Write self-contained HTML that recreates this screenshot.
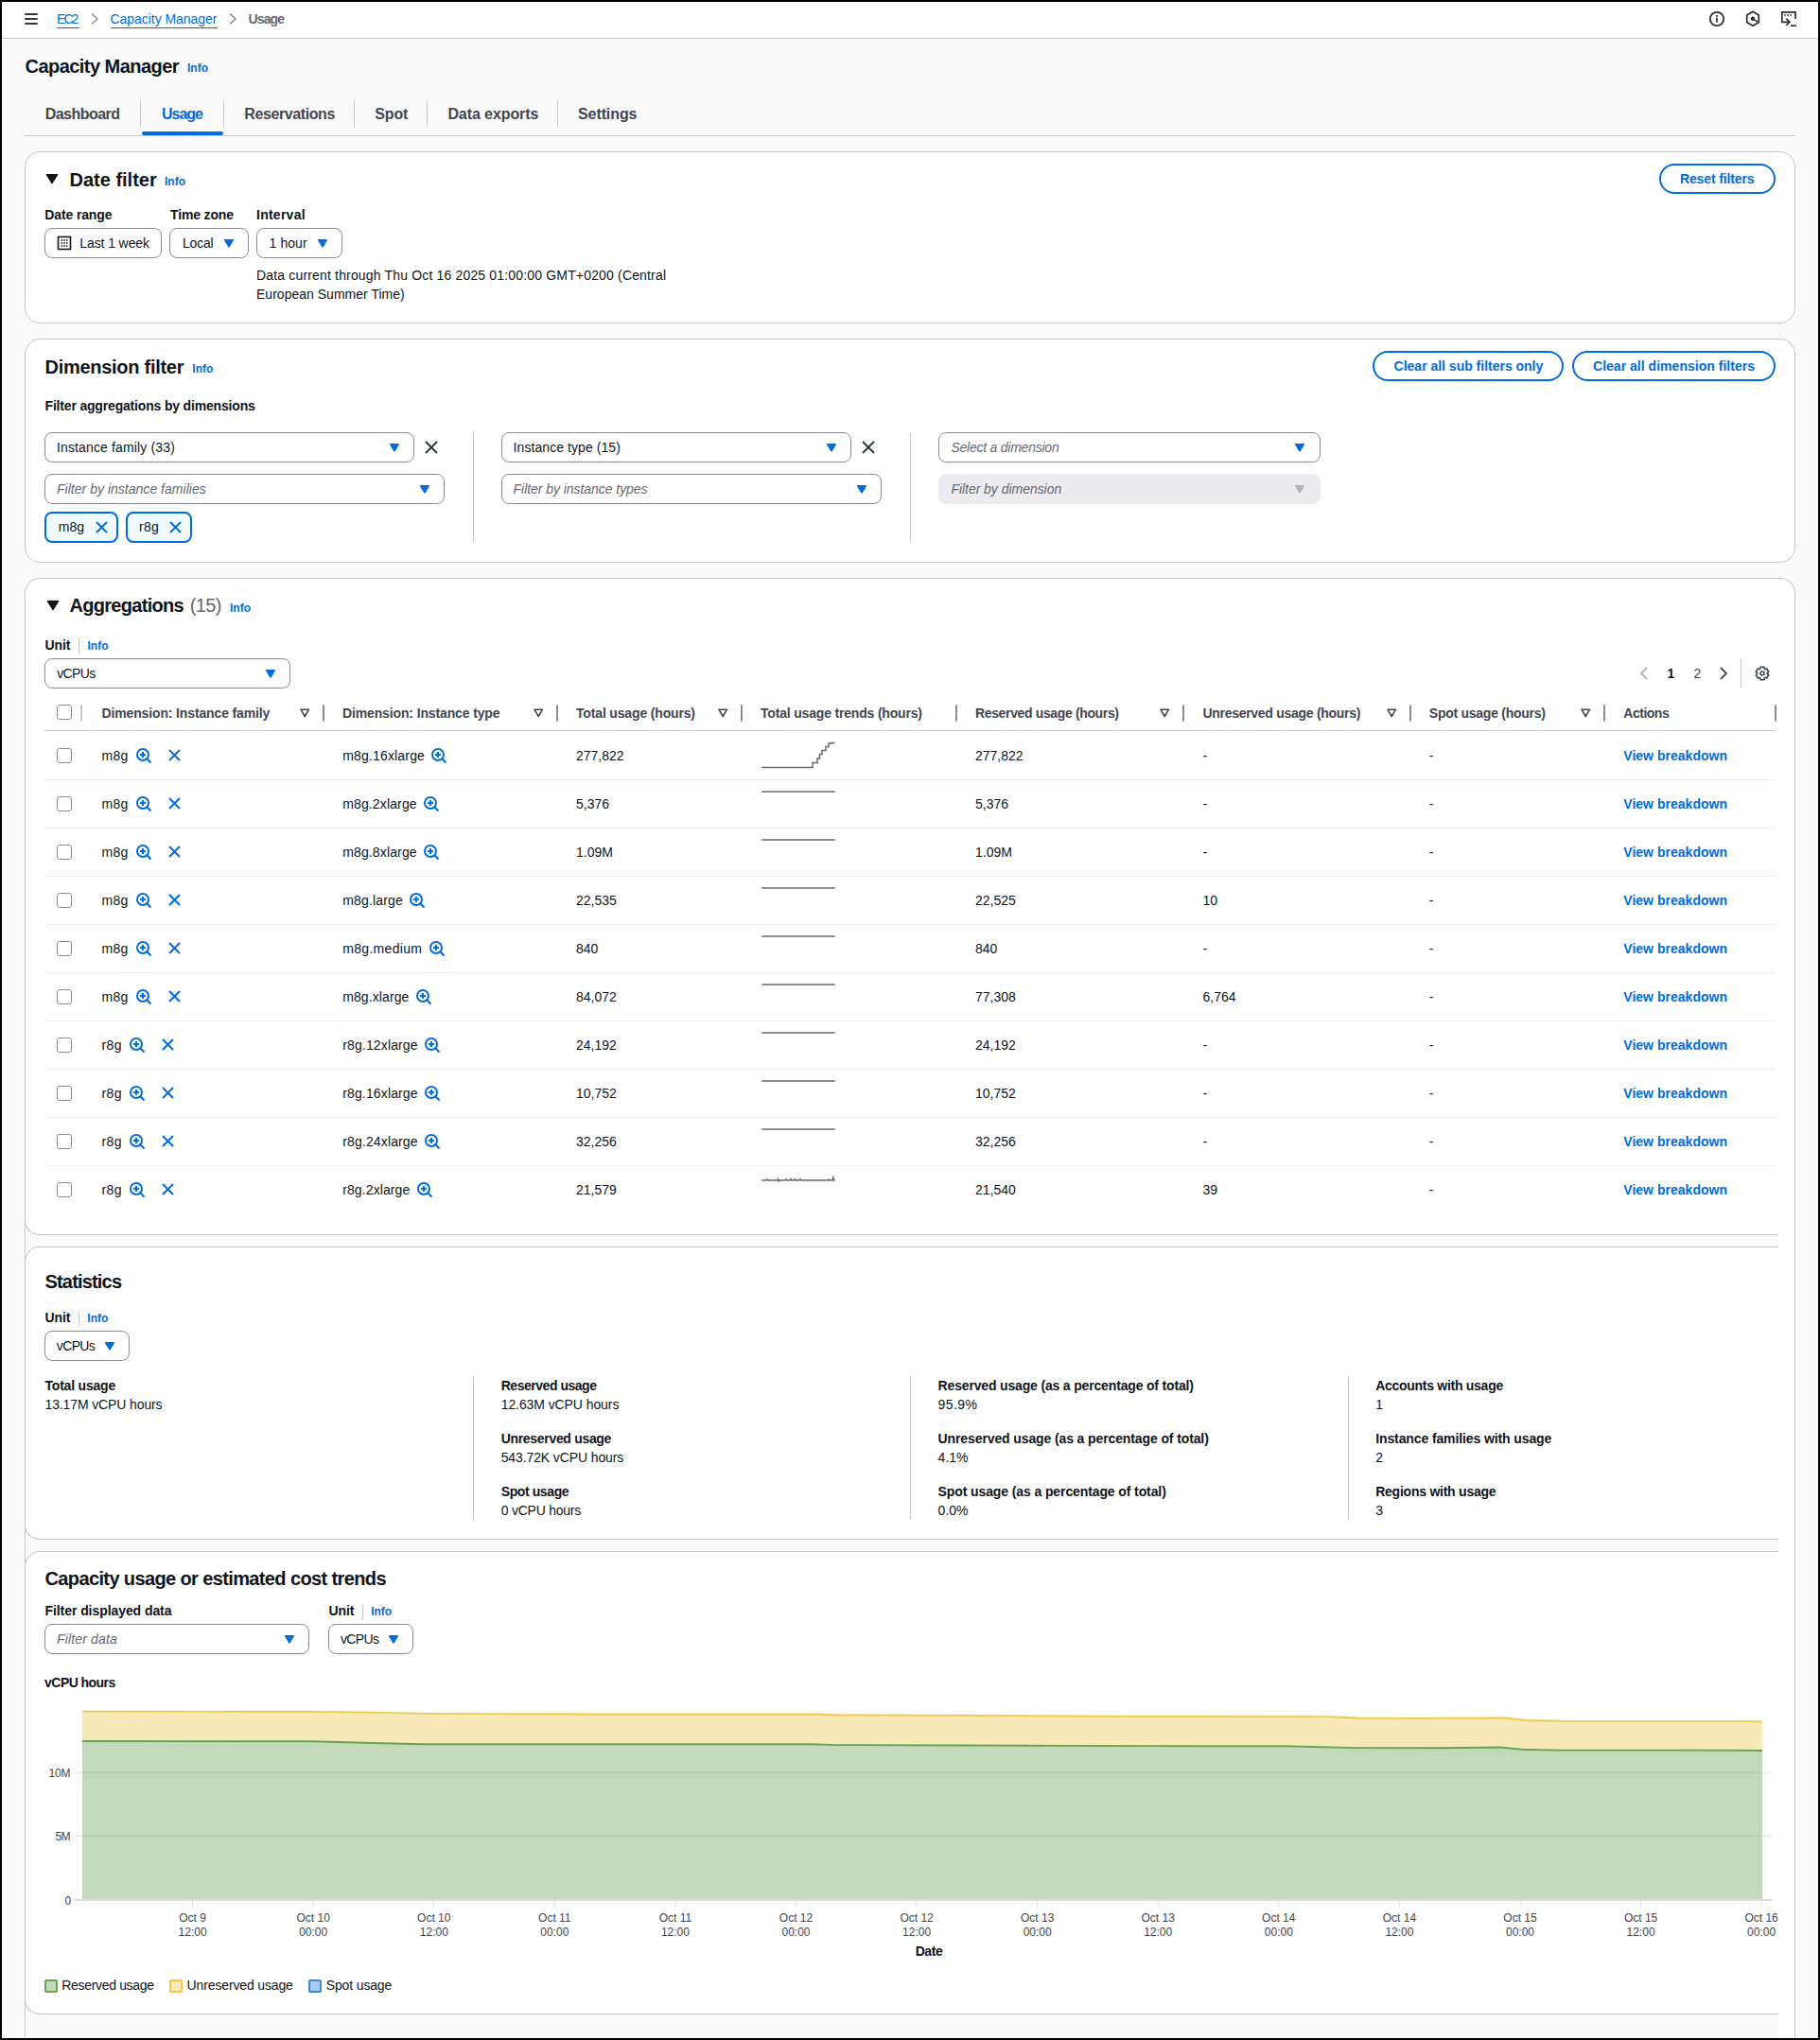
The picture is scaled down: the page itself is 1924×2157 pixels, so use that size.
<!DOCTYPE html><html><head><meta charset="utf-8"><style>html,body{margin:0;padding:0;}body{width:1924px;height:2157px;position:relative;overflow:hidden;background:#fafafa;font-family:"Liberation Sans",sans-serif;}.t{position:absolute;white-space:nowrap;}</style></head><body>
<div style="position:absolute;left:0px;top:0px;width:1924px;height:40px;background:#fff;"></div>
<div style="position:absolute;left:0px;top:40px;width:1924px;height:1px;background:#c6c6cd;"></div>
<div style="position:absolute;left:26px;top:14px;width:14px;height:2px;background:#0f141a;border-radius:1px;opacity:.85"></div>
<div style="position:absolute;left:26px;top:19px;width:14px;height:2px;background:#0f141a;border-radius:1px;opacity:.85"></div>
<div style="position:absolute;left:26px;top:24px;width:14px;height:2px;background:#0f141a;border-radius:1px;opacity:.85"></div>
<div class="t" style="left:60px;top:13px;font-size:14px;line-height:14px;color:#006ce0;letter-spacing:-1.917px;">EC2</div>
<div style="position:absolute;left:60px;top:29px;width:24px;height:1.2px;background:#006ce0;"></div>
<svg style="position:absolute;left:95px;top:13px;" width="10" height="14" viewBox="0 0 10 14" fill="none"><path d="M2 1.5L8 7L2 12.5" stroke="#8c8c94" stroke-width="1.6"/></svg>
<div class="t" style="left:116.5px;top:13px;font-size:14px;line-height:14px;color:#006ce0;letter-spacing:-0.041px;">Capacity Manager</div>
<div style="position:absolute;left:116.5px;top:29px;width:113.5px;height:1.2px;background:#006ce0;"></div>
<svg style="position:absolute;left:241px;top:13px;" width="10" height="14" viewBox="0 0 10 14" fill="none"><path d="M2 1.5L8 7L2 12.5" stroke="#8c8c94" stroke-width="1.6"/></svg>
<div class="t" style="left:262.5px;top:13px;font-size:14px;line-height:14px;color:#656871;font-weight:700;letter-spacing:-0.880px;">Usage</div>
<svg style="position:absolute;left:1806px;top:11px;opacity:.88" width="18" height="18" viewBox="0 0 18 18" fill="none"><circle cx="9" cy="9" r="7.2" stroke="#0f141a" stroke-width="1.8"/><path d="M9 7.8v4.6" stroke="#0f141a" stroke-width="1.8"/><rect x="8.1" y="5" width="1.8" height="1.8" fill="#0f141a"/></svg>
<svg style="position:absolute;left:1845px;top:11px;opacity:.88" width="16" height="18" viewBox="0 0 16 18" fill="none"><path d="M8 1.2L14.3 4.9V12.6L8 16.3L1.7 12.6V4.9Z" stroke="#0f141a" stroke-width="1.7" stroke-linejoin="round"/><circle cx="7.9" cy="8.8" r="2.2" fill="#0f141a"/><path d="M8 8.8L13.5 12.4" stroke="#0f141a" stroke-width="1.5"/></svg>
<svg style="position:absolute;left:1882px;top:11px;opacity:.88" width="18" height="18" viewBox="0 0 18 18" fill="none"><path d="M16 9V1.8H1.8V12.3H10" stroke="#0f141a" stroke-width="1.7"/><path d="M6.3 8.6L9.9 12.3L6.3 16" stroke="#0f141a" stroke-width="1.7"/><path d="M11 16.2H17" stroke="#0f141a" stroke-width="1.7"/><rect x="4.2" y="4.2" width="1.6" height="1.6" fill="#0f141a"/><rect x="7.2" y="4.2" width="1.6" height="1.6" fill="#0f141a"/><rect x="10.2" y="4.2" width="1.6" height="1.6" fill="#0f141a"/></svg>
<div class="t" style="left:26.5px;top:59.5px;font-size:20px;line-height:20px;color:#0f141a;font-weight:700;letter-spacing:-0.545px;">Capacity Manager</div>
<div class="t" style="left:198px;top:66px;font-size:12px;line-height:12px;color:#006ce0;font-weight:700;letter-spacing:0.003px;">Info</div>
<div class="t" style="left:47.7px;top:113px;font-size:16px;line-height:16px;color:#424650;font-weight:700;letter-spacing:-0.534px;">Dashboard</div>
<div class="t" style="left:171px;top:113px;font-size:16px;line-height:16px;color:#006ce0;font-weight:700;letter-spacing:-1.006px;">Usage</div>
<div class="t" style="left:258.3px;top:113px;font-size:16px;line-height:16px;color:#424650;font-weight:700;letter-spacing:-0.408px;">Reservations</div>
<div class="t" style="left:396.3px;top:113px;font-size:16px;line-height:16px;color:#424650;font-weight:700;letter-spacing:-0.149px;">Spot</div>
<div class="t" style="left:473.4px;top:113px;font-size:16px;line-height:16px;color:#424650;font-weight:700;letter-spacing:-0.084px;">Data exports</div>
<div class="t" style="left:611px;top:113px;font-size:16px;line-height:16px;color:#424650;font-weight:700;letter-spacing:-0.088px;">Settings</div>
<div style="position:absolute;left:148px;top:106px;width:1px;height:28px;background:#c6c6cd;"></div>
<div style="position:absolute;left:236px;top:106px;width:1px;height:28px;background:#c6c6cd;"></div>
<div style="position:absolute;left:374px;top:106px;width:1px;height:28px;background:#c6c6cd;"></div>
<div style="position:absolute;left:451px;top:106px;width:1px;height:28px;background:#c6c6cd;"></div>
<div style="position:absolute;left:589px;top:106px;width:1px;height:28px;background:#c6c6cd;"></div>
<div style="position:absolute;left:150px;top:139px;width:86px;height:4px;background:#006ce0;border-radius:2px;"></div>
<div style="position:absolute;left:26px;top:143px;width:1872px;height:1px;background:#c6c6cd;"></div>
<div style="position:absolute;left:26px;top:160px;width:1872px;height:182px;box-sizing:border-box;border:1px solid #c6c6cd;border-radius:16px;background:#fff;"></div>
<svg style="position:absolute;left:48px;top:183px;" width="14" height="12" viewBox="0 0 14 12" fill="none"><path d="M1 1.5H13L7 11Z" fill="#0f141a" stroke="#0f141a" stroke-linejoin="round"/></svg>
<div class="t" style="left:73.5px;top:179.5px;font-size:20px;line-height:20px;color:#0f141a;font-weight:700;letter-spacing:-0.005px;">Date filter</div>
<div class="t" style="left:174px;top:186px;font-size:12px;line-height:12px;color:#006ce0;font-weight:700;letter-spacing:0.003px;">Info</div>
<div style="position:absolute;left:1754px;top:173px;width:123px;height:32px;box-sizing:border-box;border:2px solid #006ce0;border-radius:16px;background:#fff;"></div>
<div class="t" style="left:1776px;top:182px;font-size:14px;line-height:14px;color:#006ce0;font-weight:700;letter-spacing:-0.137px;">Reset filters</div>
<div class="t" style="left:47.3px;top:220px;font-size:14px;line-height:14px;color:#0f141a;font-weight:700;letter-spacing:-0.129px;">Date range</div>
<div class="t" style="left:180px;top:220px;font-size:14px;line-height:14px;color:#0f141a;font-weight:700;letter-spacing:-0.150px;">Time zone</div>
<div class="t" style="left:271px;top:220px;font-size:14px;line-height:14px;color:#0f141a;font-weight:700;letter-spacing:0.257px;">Interval</div>
<div style="position:absolute;left:47px;top:241px;width:124px;height:32px;box-sizing:border-box;border:1px solid #8c8c94;border-radius:8px;background:#fff;"></div>
<svg style="position:absolute;left:60px;top:249px;" width="16" height="16" viewBox="0 0 16 16" fill="none"><rect x="1.5" y="1.5" width="13" height="13" stroke="#0f141a" stroke-width="1.6"/><path d="M4.5 5h1.6M7.2 5h1.6M9.9 5h1.6M4.5 8h1.6M7.2 8h1.6M9.9 8h1.6M4.5 11h1.6M7.2 11h1.6M9.9 11h1.6" stroke="#0f141a" stroke-width="1.6"/></svg>
<div class="t" style="left:84.3px;top:250px;font-size:14px;line-height:14px;color:#0f141a;letter-spacing:-0.101px;">Last 1 week</div>
<div style="position:absolute;left:179px;top:241px;width:84px;height:32px;box-sizing:border-box;border:1px solid #8c8c94;border-radius:8px;background:#fff;"></div>
<div class="t" style="left:193px;top:250px;font-size:14px;line-height:14px;color:#0f141a;letter-spacing:-0.192px;">Local</div>
<svg style="position:absolute;left:237px;top:253px;" width="10" height="9" viewBox="0 0 10 9" fill="none"><path d="M0.8 0.8H9.2L5 7.8Z" fill="#006ce0" stroke="#006ce0" stroke-width="1.6" stroke-linejoin="round"/></svg>
<div style="position:absolute;left:271px;top:241px;width:91px;height:32px;box-sizing:border-box;border:1px solid #8c8c94;border-radius:8px;background:#fff;"></div>
<div class="t" style="left:284.6px;top:250px;font-size:14px;line-height:14px;color:#0f141a;letter-spacing:0.061px;">1 hour</div>
<svg style="position:absolute;left:336px;top:253px;" width="10" height="9" viewBox="0 0 10 9" fill="none"><path d="M0.8 0.8H9.2L5 7.8Z" fill="#006ce0" stroke="#006ce0" stroke-width="1.6" stroke-linejoin="round"/></svg>
<div class="t" style="left:271px;top:284px;font-size:14px;line-height:14px;color:#0f141a;letter-spacing:0.166px;">Data current through Thu Oct 16 2025 01:00:00 GMT+0200 (Central</div>
<div class="t" style="left:271px;top:304px;font-size:14px;line-height:14px;color:#0f141a;letter-spacing:0.015px;">European Summer Time)</div>
<div style="position:absolute;left:26px;top:358px;width:1872px;height:237px;box-sizing:border-box;border:1px solid #c6c6cd;border-radius:16px;background:#fff;"></div>
<div class="t" style="left:47.5px;top:377.5px;font-size:20px;line-height:20px;color:#0f141a;font-weight:700;letter-spacing:-0.276px;">Dimension filter</div>
<div class="t" style="left:203.3px;top:384px;font-size:12px;line-height:12px;color:#006ce0;font-weight:700;letter-spacing:0.003px;">Info</div>
<div style="position:absolute;left:1451px;top:371px;width:202px;height:32px;box-sizing:border-box;border:2px solid #006ce0;border-radius:16px;background:#fff;"></div>
<div class="t" style="left:1473.6px;top:379.5px;font-size:14px;line-height:14px;color:#006ce0;font-weight:700;letter-spacing:-0.010px;">Clear all sub filters only</div>
<div style="position:absolute;left:1662px;top:371px;width:215px;height:32px;box-sizing:border-box;border:2px solid #006ce0;border-radius:16px;background:#fff;"></div>
<div class="t" style="left:1684px;top:379.5px;font-size:14px;line-height:14px;color:#006ce0;font-weight:700;letter-spacing:0.024px;">Clear all dimension filters</div>
<div class="t" style="left:47.5px;top:421.5px;font-size:14px;line-height:14px;color:#0f141a;font-weight:700;letter-spacing:-0.176px;">Filter aggregations by dimensions</div>
<div style="position:absolute;left:47px;top:457px;width:391px;height:32px;box-sizing:border-box;border:1px solid #8c8c94;border-radius:8px;background:#fff;"></div>
<div class="t" style="left:60px;top:466px;font-size:14px;line-height:14px;color:#0f141a;letter-spacing:0.139px;">Instance family (33)</div>
<svg style="position:absolute;left:411.9px;top:468.8px;" width="10" height="9" viewBox="0 0 10 9" fill="none"><path d="M0.8 0.8H9.2L5 7.8Z" fill="#006ce0" stroke="#006ce0" stroke-width="1.6" stroke-linejoin="round"/></svg>
<svg style="position:absolute;left:449px;top:466px;" width="14" height="14" viewBox="0 0 14 14" fill="none"><path d="M1 1L13 13M13 1L1 13" stroke="#2a303b" stroke-width="1.8"/></svg>
<div style="position:absolute;left:47px;top:501px;width:423px;height:32px;box-sizing:border-box;border:1px solid #8c8c94;border-radius:8px;background:#fff;"></div>
<div class="t" style="left:60px;top:510px;font-size:14px;line-height:14px;color:#656871;font-style:italic;letter-spacing:0.021px;">Filter by instance families</div>
<svg style="position:absolute;left:443.8px;top:512.8px;" width="10" height="9" viewBox="0 0 10 9" fill="none"><path d="M0.8 0.8H9.2L5 7.8Z" fill="#006ce0" stroke="#006ce0" stroke-width="1.6" stroke-linejoin="round"/></svg>
<div style="position:absolute;left:47px;top:541px;width:78px;height:33px;box-sizing:border-box;border:2px solid #006ce0;border-radius:8px;background:#f0fbff;"></div>
<div class="t" style="left:61.7px;top:549.5px;font-size:14px;line-height:14px;color:#0f141a;letter-spacing:0.033px;">m8g</div>
<svg style="position:absolute;left:100.5px;top:551px;" width="13" height="13" viewBox="0 0 13 13" fill="none"><path d="M1 1L12 12M12 1L1 12" stroke="#006ce0" stroke-width="2"/></svg>
<div style="position:absolute;left:133px;top:541px;width:70px;height:33px;box-sizing:border-box;border:2px solid #006ce0;border-radius:8px;background:#f0fbff;"></div>
<div class="t" style="left:147px;top:549.5px;font-size:14px;line-height:14px;color:#0f141a;letter-spacing:0.233px;">r8g</div>
<svg style="position:absolute;left:178.5px;top:551px;" width="13" height="13" viewBox="0 0 13 13" fill="none"><path d="M1 1L12 12M12 1L1 12" stroke="#006ce0" stroke-width="2"/></svg>
<div style="position:absolute;left:500px;top:457px;width:1px;height:117px;background:#c6c6cd;"></div>
<div style="position:absolute;left:530px;top:457px;width:370px;height:32px;box-sizing:border-box;border:1px solid #8c8c94;border-radius:8px;background:#fff;"></div>
<div class="t" style="left:542.6px;top:466px;font-size:14px;line-height:14px;color:#0f141a;letter-spacing:0.067px;">Instance type (15)</div>
<svg style="position:absolute;left:873.7px;top:468.8px;" width="10" height="9" viewBox="0 0 10 9" fill="none"><path d="M0.8 0.8H9.2L5 7.8Z" fill="#006ce0" stroke="#006ce0" stroke-width="1.6" stroke-linejoin="round"/></svg>
<svg style="position:absolute;left:911px;top:466px;" width="14" height="14" viewBox="0 0 14 14" fill="none"><path d="M1 1L13 13M13 1L1 13" stroke="#2a303b" stroke-width="1.8"/></svg>
<div style="position:absolute;left:530px;top:501px;width:402px;height:32px;box-sizing:border-box;border:1px solid #8c8c94;border-radius:8px;background:#fff;"></div>
<div class="t" style="left:542.6px;top:510px;font-size:14px;line-height:14px;color:#656871;font-style:italic;letter-spacing:-0.051px;">Filter by instance types</div>
<svg style="position:absolute;left:905.8px;top:512.8px;" width="10" height="9" viewBox="0 0 10 9" fill="none"><path d="M0.8 0.8H9.2L5 7.8Z" fill="#006ce0" stroke="#006ce0" stroke-width="1.6" stroke-linejoin="round"/></svg>
<div style="position:absolute;left:962px;top:457px;width:1px;height:117px;background:#c6c6cd;"></div>
<div style="position:absolute;left:992px;top:457px;width:404px;height:32px;box-sizing:border-box;border:1px solid #8c8c94;border-radius:8px;background:#fff;"></div>
<div class="t" style="left:1005.4px;top:466px;font-size:14px;line-height:14px;color:#656871;font-style:italic;letter-spacing:-0.235px;">Select a dimension</div>
<svg style="position:absolute;left:1368.7px;top:468.8px;" width="10" height="9" viewBox="0 0 10 9" fill="none"><path d="M0.8 0.8H9.2L5 7.8Z" fill="#006ce0" stroke="#006ce0" stroke-width="1.6" stroke-linejoin="round"/></svg>
<div style="position:absolute;left:992px;top:501px;width:404px;height:32px;box-sizing:border-box;border:1px solid #ebebf0;border-radius:8px;background:#ebebf0;"></div>
<div class="t" style="left:1005.4px;top:510px;font-size:14px;line-height:14px;color:#656871;font-style:italic;letter-spacing:-0.038px;">Filter by dimension</div>
<svg style="position:absolute;left:1368.7px;top:512.8px;" width="10" height="9" viewBox="0 0 10 9" fill="none"><path d="M0.8 0.8H9.2L5 7.8Z" fill="#b4b4bb" stroke="#b4b4bb" stroke-width="1.6" stroke-linejoin="round"/></svg>
<div style="position:absolute;left:26px;top:611px;width:1872px;height:1600px;box-sizing:border-box;border:1px solid #c6c6cd;border-bottom:none;border-radius:16px 16px 0 0;background:#fff;"></div>
<div style="position:absolute;left:27px;top:1289px;width:1853px;height:46px;background:#fafafa;"></div>
<div style="position:absolute;left:27px;top:1611px;width:1853px;height:46px;background:#fafafa;"></div>
<div style="position:absolute;left:27px;top:2113px;width:1853px;height:60px;background:#fafafa;"></div>
<div style="position:absolute;left:26px;top:1200px;width:1854px;height:106px;box-sizing:border-box;border-left:1px solid #c6c6cd;border-bottom:1px solid #c6c6cd;border-radius:0 0 0 16px;background:#fff;"></div>
<div style="position:absolute;left:26px;top:1318px;width:1854px;height:310px;box-sizing:border-box;border-left:1px solid #c6c6cd;border-top:1px solid #c6c6cd;border-bottom:1px solid #c6c6cd;border-radius:16px 0 0 16px;background:#fff;"></div>
<div style="position:absolute;left:26px;top:1640px;width:1854px;height:490px;box-sizing:border-box;border-left:1px solid #c6c6cd;border-top:1px solid #c6c6cd;border-bottom:1px solid #c6c6cd;border-radius:16px 0 0 16px;background:#fff;"></div>
<svg style="position:absolute;left:48.5px;top:634px;" width="14" height="12" viewBox="0 0 14 12" fill="none"><path d="M1 1.5H13L7 11Z" fill="#0f141a" stroke="#0f141a" stroke-linejoin="round"/></svg>
<div class="t" style="left:73.4px;top:630px;font-size:20px;line-height:20px;color:#0f141a;font-weight:700;letter-spacing:-0.691px;">Aggregations</div>
<div class="t" style="left:200.7px;top:630px;font-size:20px;line-height:20px;color:#656871;letter-spacing:-0.655px;">(15)</div>
<div class="t" style="left:243px;top:637px;font-size:12px;line-height:12px;color:#006ce0;font-weight:700;letter-spacing:0.003px;">Info</div>
<div class="t" style="left:47.5px;top:675px;font-size:14px;line-height:14px;color:#0f141a;font-weight:700;letter-spacing:-0.071px;">Unit</div>
<div style="position:absolute;left:83px;top:675px;width:1px;height:16px;background:#c6c6cd;"></div>
<div class="t" style="left:92.5px;top:677px;font-size:12px;line-height:12px;color:#006ce0;font-weight:700;letter-spacing:0.003px;">Info</div>
<div style="position:absolute;left:47px;top:696px;width:260px;height:32px;box-sizing:border-box;border:1px solid #8c8c94;border-radius:8px;background:#fff;"></div>
<div class="t" style="left:60.2px;top:704.5px;font-size:14px;line-height:14px;color:#0f141a;letter-spacing:-0.640px;">vCPUs</div>
<svg style="position:absolute;left:280.9px;top:707.8px;" width="10" height="9" viewBox="0 0 10 9" fill="none"><path d="M0.8 0.8H9.2L5 7.8Z" fill="#006ce0" stroke="#006ce0" stroke-width="1.6" stroke-linejoin="round"/></svg>
<svg style="position:absolute;left:1732px;top:704px;" width="12" height="16" viewBox="0 0 12 16" fill="none"><path d="M9 2L3 8L9 14" stroke="#b4b4bb" stroke-width="1.8"/></svg>
<div class="t" style="left:1762.5px;top:705px;font-size:14px;line-height:14px;color:#0f141a;font-weight:700;">1</div>
<div class="t" style="left:1790.5px;top:705px;font-size:14px;line-height:14px;color:#424650;">2</div>
<svg style="position:absolute;left:1816px;top:704px;" width="12" height="16" viewBox="0 0 12 16" fill="none"><path d="M3 2L9 8L3 14" stroke="#424650" stroke-width="1.8"/></svg>
<div style="position:absolute;left:1840px;top:696px;width:1px;height:32px;background:#c6c6cd;"></div>
<svg style="position:absolute;left:1853.8px;top:702.8px;" width="18" height="18" viewBox="0 0 18 18" fill="none"><path d="M6.46 4.01 L6.78 1.73 L11.22 1.73 L11.54 4.01 L12.05 4.30 L14.18 3.44 L16.41 7.29 L14.59 8.71 L14.59 9.29 L16.41 10.71 L14.18 14.56 L12.05 13.70 L11.54 13.99 L11.22 16.27 L6.78 16.27 L6.46 13.99 L5.95 13.70 L3.82 14.56 L1.59 10.71 L3.41 9.29 L3.41 8.71 L1.59 7.29 L3.82 3.44 L5.95 4.30Z" transform="translate(9 9) scale(0.92) translate(-9 -9)" stroke="#424650" stroke-width="1.7" stroke-linejoin="round"/><circle cx="9" cy="9" r="2" stroke="#424650" stroke-width="1.6"/></svg>
<div style="position:absolute;left:60px;top:745px;width:16px;height:16px;box-sizing:border-box;border:1.5px solid #8c8c94;border-radius:3px;background:#fff;"></div>
<div class="t" style="left:107.5px;top:747px;font-size:14px;line-height:14px;color:#424650;font-weight:700;letter-spacing:-0.139px;">Dimension: Instance family</div>
<div class="t" style="left:362px;top:747px;font-size:14px;line-height:14px;color:#424650;font-weight:700;letter-spacing:-0.134px;">Dimension: Instance type</div>
<div class="t" style="left:609px;top:747px;font-size:14px;line-height:14px;color:#424650;font-weight:700;letter-spacing:-0.159px;">Total usage (hours)</div>
<div class="t" style="left:804px;top:747px;font-size:14px;line-height:14px;color:#424650;font-weight:700;letter-spacing:-0.181px;">Total usage trends (hours)</div>
<div class="t" style="left:1031px;top:747px;font-size:14px;line-height:14px;color:#424650;font-weight:700;letter-spacing:-0.357px;">Reserved usage (hours)</div>
<div class="t" style="left:1271.4px;top:747px;font-size:14px;line-height:14px;color:#424650;font-weight:700;letter-spacing:-0.282px;">Unreserved usage (hours)</div>
<div class="t" style="left:1510.8px;top:747px;font-size:14px;line-height:14px;color:#424650;font-weight:700;letter-spacing:-0.256px;">Spot usage (hours)</div>
<div class="t" style="left:1716.3px;top:747px;font-size:14px;line-height:14px;color:#424650;font-weight:700;letter-spacing:-0.490px;">Actions</div>
<div style="position:absolute;left:85px;top:745px;width:2px;height:17.5px;background:#c6c6cd;border-radius:1px;"></div>
<div style="position:absolute;left:340.5px;top:745px;width:2px;height:17.5px;background:#8c8c94;border-radius:1px;"></div>
<div style="position:absolute;left:587.5px;top:745px;width:2px;height:17.5px;background:#8c8c94;border-radius:1px;"></div>
<div style="position:absolute;left:783px;top:745px;width:2px;height:17.5px;background:#8c8c94;border-radius:1px;"></div>
<div style="position:absolute;left:1009.5px;top:745px;width:2px;height:17.5px;background:#8c8c94;border-radius:1px;"></div>
<div style="position:absolute;left:1250px;top:745px;width:2px;height:17.5px;background:#8c8c94;border-radius:1px;"></div>
<div style="position:absolute;left:1489.5px;top:745px;width:2px;height:17.5px;background:#8c8c94;border-radius:1px;"></div>
<div style="position:absolute;left:1695px;top:745px;width:2px;height:17.5px;background:#8c8c94;border-radius:1px;"></div>
<div style="position:absolute;left:1875.5px;top:745px;width:2px;height:17.5px;background:#8c8c94;border-radius:1px;"></div>
<svg style="position:absolute;left:316.5px;top:749px;" width="11" height="10" viewBox="0 0 11 10" fill="none"><path d="M1 1.2H9.5L5.25 8.5Z" stroke="#424650" stroke-width="1.6" stroke-linejoin="round"/></svg>
<svg style="position:absolute;left:563.5px;top:749px;" width="11" height="10" viewBox="0 0 11 10" fill="none"><path d="M1 1.2H9.5L5.25 8.5Z" stroke="#424650" stroke-width="1.6" stroke-linejoin="round"/></svg>
<svg style="position:absolute;left:758.5px;top:749px;" width="11" height="10" viewBox="0 0 11 10" fill="none"><path d="M1 1.2H9.5L5.25 8.5Z" stroke="#424650" stroke-width="1.6" stroke-linejoin="round"/></svg>
<svg style="position:absolute;left:1225.5px;top:749px;" width="11" height="10" viewBox="0 0 11 10" fill="none"><path d="M1 1.2H9.5L5.25 8.5Z" stroke="#424650" stroke-width="1.6" stroke-linejoin="round"/></svg>
<svg style="position:absolute;left:1465.5px;top:749px;" width="11" height="10" viewBox="0 0 11 10" fill="none"><path d="M1 1.2H9.5L5.25 8.5Z" stroke="#424650" stroke-width="1.6" stroke-linejoin="round"/></svg>
<svg style="position:absolute;left:1670.5px;top:749px;" width="11" height="10" viewBox="0 0 11 10" fill="none"><path d="M1 1.2H9.5L5.25 8.5Z" stroke="#424650" stroke-width="1.6" stroke-linejoin="round"/></svg>
<div style="position:absolute;left:47px;top:772px;width:1830px;height:1px;background:#c6c6cd;"></div>
<div style="position:absolute;left:60px;top:791px;width:16px;height:16px;box-sizing:border-box;border:1.5px solid #8c8c94;border-radius:3px;background:#fff;"></div>
<div class="t" style="left:107.5px;top:792px;font-size:14px;line-height:14px;color:#0f141a;letter-spacing:0.283px;">m8g</div>
<svg style="position:absolute;left:143.5px;top:791px;" width="17" height="17" viewBox="0 0 17 17" fill="none"><circle cx="7" cy="7" r="6" stroke="#006ce0" stroke-width="2"/><path d="M11.3 11.3L15.5 15.5M7 4v6M4 7h6" stroke="#006ce0" stroke-width="2"/></svg>
<svg style="position:absolute;left:177.5px;top:792px;" width="13" height="13" viewBox="0 0 13 13" fill="none"><path d="M1 1L12 12M12 1L1 12" stroke="#006ce0" stroke-width="2"/></svg>
<div class="t" style="left:362.2px;top:792px;font-size:14px;line-height:14px;color:#0f141a;letter-spacing:0.170px;">m8g.16xlarge</div>
<svg style="position:absolute;left:456.4px;top:791px;" width="17" height="17" viewBox="0 0 17 17" fill="none"><circle cx="7" cy="7" r="6" stroke="#006ce0" stroke-width="2"/><path d="M11.3 11.3L15.5 15.5M7 4v6M4 7h6" stroke="#006ce0" stroke-width="2"/></svg>
<div class="t" style="left:609px;top:792px;font-size:14px;line-height:14px;color:#0f141a;">277,822</div>
<div class="t" style="left:1031px;top:792px;font-size:14px;line-height:14px;color:#0f141a;">277,822</div>
<div class="t" style="left:1271.5px;top:792px;font-size:14px;line-height:14px;color:#0f141a;">-</div>
<div class="t" style="left:1510.8px;top:792px;font-size:14px;line-height:14px;color:#0f141a;">-</div>
<div class="t" style="left:1716.3px;top:792px;font-size:14px;line-height:14px;color:#006ce0;font-weight:700;letter-spacing:0.020px;">View breakdown</div>
<svg style="position:absolute;left:800px;top:780px;" width="90" height="36" viewBox="0 0 90 36" fill="none"><path d="M5.2 31.4H59V26.4H64V22H66.5V17.5H69V13.5H73V9.5H76V6H79V5.6H82.8" stroke="#656871" stroke-width="1.5"/></svg>
<div style="position:absolute;left:47px;top:824px;width:1830px;height:1px;background:#ebebf0;"></div>
<div style="position:absolute;left:60px;top:842px;width:16px;height:16px;box-sizing:border-box;border:1.5px solid #8c8c94;border-radius:3px;background:#fff;"></div>
<div class="t" style="left:107.5px;top:843px;font-size:14px;line-height:14px;color:#0f141a;letter-spacing:0.283px;">m8g</div>
<svg style="position:absolute;left:143.5px;top:842px;" width="17" height="17" viewBox="0 0 17 17" fill="none"><circle cx="7" cy="7" r="6" stroke="#006ce0" stroke-width="2"/><path d="M11.3 11.3L15.5 15.5M7 4v6M4 7h6" stroke="#006ce0" stroke-width="2"/></svg>
<svg style="position:absolute;left:177.5px;top:843px;" width="13" height="13" viewBox="0 0 13 13" fill="none"><path d="M1 1L12 12M12 1L1 12" stroke="#006ce0" stroke-width="2"/></svg>
<div class="t" style="left:362.2px;top:843px;font-size:14px;line-height:14px;color:#0f141a;letter-spacing:0.136px;">m8g.2xlarge</div>
<svg style="position:absolute;left:448.1px;top:842px;" width="17" height="17" viewBox="0 0 17 17" fill="none"><circle cx="7" cy="7" r="6" stroke="#006ce0" stroke-width="2"/><path d="M11.3 11.3L15.5 15.5M7 4v6M4 7h6" stroke="#006ce0" stroke-width="2"/></svg>
<div class="t" style="left:609px;top:843px;font-size:14px;line-height:14px;color:#0f141a;">5,376</div>
<div class="t" style="left:1031px;top:843px;font-size:14px;line-height:14px;color:#0f141a;">5,376</div>
<div class="t" style="left:1271.5px;top:843px;font-size:14px;line-height:14px;color:#0f141a;">-</div>
<div class="t" style="left:1510.8px;top:843px;font-size:14px;line-height:14px;color:#0f141a;">-</div>
<div class="t" style="left:1716.3px;top:843px;font-size:14px;line-height:14px;color:#006ce0;font-weight:700;letter-spacing:0.020px;">View breakdown</div>
<svg style="position:absolute;left:800px;top:826.6px;" width="90" height="20" viewBox="0 0 90 20" fill="none"><path d="M5.2 10H82.8" stroke="#656871" stroke-width="1.5"/></svg>
<div style="position:absolute;left:47px;top:875px;width:1830px;height:1px;background:#ebebf0;"></div>
<div style="position:absolute;left:60px;top:893px;width:16px;height:16px;box-sizing:border-box;border:1.5px solid #8c8c94;border-radius:3px;background:#fff;"></div>
<div class="t" style="left:107.5px;top:894px;font-size:14px;line-height:14px;color:#0f141a;letter-spacing:0.283px;">m8g</div>
<svg style="position:absolute;left:143.5px;top:893px;" width="17" height="17" viewBox="0 0 17 17" fill="none"><circle cx="7" cy="7" r="6" stroke="#006ce0" stroke-width="2"/><path d="M11.3 11.3L15.5 15.5M7 4v6M4 7h6" stroke="#006ce0" stroke-width="2"/></svg>
<svg style="position:absolute;left:177.5px;top:894px;" width="13" height="13" viewBox="0 0 13 13" fill="none"><path d="M1 1L12 12M12 1L1 12" stroke="#006ce0" stroke-width="2"/></svg>
<div class="t" style="left:362.2px;top:894px;font-size:14px;line-height:14px;color:#0f141a;letter-spacing:0.136px;">m8g.8xlarge</div>
<svg style="position:absolute;left:448.1px;top:893px;" width="17" height="17" viewBox="0 0 17 17" fill="none"><circle cx="7" cy="7" r="6" stroke="#006ce0" stroke-width="2"/><path d="M11.3 11.3L15.5 15.5M7 4v6M4 7h6" stroke="#006ce0" stroke-width="2"/></svg>
<div class="t" style="left:609px;top:894px;font-size:14px;line-height:14px;color:#0f141a;">1.09M</div>
<div class="t" style="left:1031px;top:894px;font-size:14px;line-height:14px;color:#0f141a;">1.09M</div>
<div class="t" style="left:1271.5px;top:894px;font-size:14px;line-height:14px;color:#0f141a;">-</div>
<div class="t" style="left:1510.8px;top:894px;font-size:14px;line-height:14px;color:#0f141a;">-</div>
<div class="t" style="left:1716.3px;top:894px;font-size:14px;line-height:14px;color:#006ce0;font-weight:700;letter-spacing:0.020px;">View breakdown</div>
<svg style="position:absolute;left:800px;top:877.6px;" width="90" height="20" viewBox="0 0 90 20" fill="none"><path d="M5.2 10H82.8" stroke="#656871" stroke-width="1.5"/></svg>
<div style="position:absolute;left:47px;top:926px;width:1830px;height:1px;background:#ebebf0;"></div>
<div style="position:absolute;left:60px;top:944px;width:16px;height:16px;box-sizing:border-box;border:1.5px solid #8c8c94;border-radius:3px;background:#fff;"></div>
<div class="t" style="left:107.5px;top:945px;font-size:14px;line-height:14px;color:#0f141a;letter-spacing:0.283px;">m8g</div>
<svg style="position:absolute;left:143.5px;top:944px;" width="17" height="17" viewBox="0 0 17 17" fill="none"><circle cx="7" cy="7" r="6" stroke="#006ce0" stroke-width="2"/><path d="M11.3 11.3L15.5 15.5M7 4v6M4 7h6" stroke="#006ce0" stroke-width="2"/></svg>
<svg style="position:absolute;left:177.5px;top:945px;" width="13" height="13" viewBox="0 0 13 13" fill="none"><path d="M1 1L12 12M12 1L1 12" stroke="#006ce0" stroke-width="2"/></svg>
<div class="t" style="left:362.2px;top:945px;font-size:14px;line-height:14px;color:#0f141a;letter-spacing:0.168px;">m8g.large</div>
<svg style="position:absolute;left:433.3px;top:944px;" width="17" height="17" viewBox="0 0 17 17" fill="none"><circle cx="7" cy="7" r="6" stroke="#006ce0" stroke-width="2"/><path d="M11.3 11.3L15.5 15.5M7 4v6M4 7h6" stroke="#006ce0" stroke-width="2"/></svg>
<div class="t" style="left:609px;top:945px;font-size:14px;line-height:14px;color:#0f141a;">22,535</div>
<div class="t" style="left:1031px;top:945px;font-size:14px;line-height:14px;color:#0f141a;">22,525</div>
<div class="t" style="left:1271.5px;top:945px;font-size:14px;line-height:14px;color:#0f141a;">10</div>
<div class="t" style="left:1510.8px;top:945px;font-size:14px;line-height:14px;color:#0f141a;">-</div>
<div class="t" style="left:1716.3px;top:945px;font-size:14px;line-height:14px;color:#006ce0;font-weight:700;letter-spacing:0.020px;">View breakdown</div>
<svg style="position:absolute;left:800px;top:929.2px;" width="90" height="20" viewBox="0 0 90 20" fill="none"><path d="M5.2 10H82.8" stroke="#656871" stroke-width="1.5"/></svg>
<div style="position:absolute;left:47px;top:977px;width:1830px;height:1px;background:#ebebf0;"></div>
<div style="position:absolute;left:60px;top:995px;width:16px;height:16px;box-sizing:border-box;border:1.5px solid #8c8c94;border-radius:3px;background:#fff;"></div>
<div class="t" style="left:107.5px;top:996px;font-size:14px;line-height:14px;color:#0f141a;letter-spacing:0.283px;">m8g</div>
<svg style="position:absolute;left:143.5px;top:995px;" width="17" height="17" viewBox="0 0 17 17" fill="none"><circle cx="7" cy="7" r="6" stroke="#006ce0" stroke-width="2"/><path d="M11.3 11.3L15.5 15.5M7 4v6M4 7h6" stroke="#006ce0" stroke-width="2"/></svg>
<svg style="position:absolute;left:177.5px;top:996px;" width="13" height="13" viewBox="0 0 13 13" fill="none"><path d="M1 1L12 12M12 1L1 12" stroke="#006ce0" stroke-width="2"/></svg>
<div class="t" style="left:362.2px;top:996px;font-size:14px;line-height:14px;color:#0f141a;letter-spacing:0.320px;">m8g.medium</div>
<svg style="position:absolute;left:453.5px;top:995px;" width="17" height="17" viewBox="0 0 17 17" fill="none"><circle cx="7" cy="7" r="6" stroke="#006ce0" stroke-width="2"/><path d="M11.3 11.3L15.5 15.5M7 4v6M4 7h6" stroke="#006ce0" stroke-width="2"/></svg>
<div class="t" style="left:609px;top:996px;font-size:14px;line-height:14px;color:#0f141a;">840</div>
<div class="t" style="left:1031px;top:996px;font-size:14px;line-height:14px;color:#0f141a;">840</div>
<div class="t" style="left:1271.5px;top:996px;font-size:14px;line-height:14px;color:#0f141a;">-</div>
<div class="t" style="left:1510.8px;top:996px;font-size:14px;line-height:14px;color:#0f141a;">-</div>
<div class="t" style="left:1716.3px;top:996px;font-size:14px;line-height:14px;color:#006ce0;font-weight:700;letter-spacing:0.020px;">View breakdown</div>
<svg style="position:absolute;left:800px;top:980px;" width="90" height="20" viewBox="0 0 90 20" fill="none"><path d="M5.2 10H82.8" stroke="#656871" stroke-width="1.5"/></svg>
<div style="position:absolute;left:47px;top:1028px;width:1830px;height:1px;background:#ebebf0;"></div>
<div style="position:absolute;left:60px;top:1046px;width:16px;height:16px;box-sizing:border-box;border:1.5px solid #8c8c94;border-radius:3px;background:#fff;"></div>
<div class="t" style="left:107.5px;top:1047px;font-size:14px;line-height:14px;color:#0f141a;letter-spacing:0.283px;">m8g</div>
<svg style="position:absolute;left:143.5px;top:1046px;" width="17" height="17" viewBox="0 0 17 17" fill="none"><circle cx="7" cy="7" r="6" stroke="#006ce0" stroke-width="2"/><path d="M11.3 11.3L15.5 15.5M7 4v6M4 7h6" stroke="#006ce0" stroke-width="2"/></svg>
<svg style="position:absolute;left:177.5px;top:1047px;" width="13" height="13" viewBox="0 0 13 13" fill="none"><path d="M1 1L12 12M12 1L1 12" stroke="#006ce0" stroke-width="2"/></svg>
<div class="t" style="left:362.2px;top:1047px;font-size:14px;line-height:14px;color:#0f141a;letter-spacing:0.105px;">m8g.xlarge</div>
<svg style="position:absolute;left:439.9px;top:1046px;" width="17" height="17" viewBox="0 0 17 17" fill="none"><circle cx="7" cy="7" r="6" stroke="#006ce0" stroke-width="2"/><path d="M11.3 11.3L15.5 15.5M7 4v6M4 7h6" stroke="#006ce0" stroke-width="2"/></svg>
<div class="t" style="left:609px;top:1047px;font-size:14px;line-height:14px;color:#0f141a;">84,072</div>
<div class="t" style="left:1031px;top:1047px;font-size:14px;line-height:14px;color:#0f141a;">77,308</div>
<div class="t" style="left:1271.5px;top:1047px;font-size:14px;line-height:14px;color:#0f141a;">6,764</div>
<div class="t" style="left:1510.8px;top:1047px;font-size:14px;line-height:14px;color:#0f141a;">-</div>
<div class="t" style="left:1716.3px;top:1047px;font-size:14px;line-height:14px;color:#006ce0;font-weight:700;letter-spacing:0.020px;">View breakdown</div>
<svg style="position:absolute;left:800px;top:1031px;" width="90" height="20" viewBox="0 0 90 20" fill="none"><path d="M5.2 10H82.8" stroke="#656871" stroke-width="1.5"/></svg>
<div style="position:absolute;left:47px;top:1079px;width:1830px;height:1px;background:#ebebf0;"></div>
<div style="position:absolute;left:60px;top:1097px;width:16px;height:16px;box-sizing:border-box;border:1.5px solid #8c8c94;border-radius:3px;background:#fff;"></div>
<div class="t" style="left:107.5px;top:1098px;font-size:14px;line-height:14px;color:#0f141a;letter-spacing:0.383px;">r8g</div>
<svg style="position:absolute;left:136.5px;top:1097px;" width="17" height="17" viewBox="0 0 17 17" fill="none"><circle cx="7" cy="7" r="6" stroke="#006ce0" stroke-width="2"/><path d="M11.3 11.3L15.5 15.5M7 4v6M4 7h6" stroke="#006ce0" stroke-width="2"/></svg>
<svg style="position:absolute;left:170.5px;top:1098px;" width="13" height="13" viewBox="0 0 13 13" fill="none"><path d="M1 1L12 12M12 1L1 12" stroke="#006ce0" stroke-width="2"/></svg>
<div class="t" style="left:362.2px;top:1098px;font-size:14px;line-height:14px;color:#0f141a;letter-spacing:0.143px;">r8g.12xlarge</div>
<svg style="position:absolute;left:449.1px;top:1097px;" width="17" height="17" viewBox="0 0 17 17" fill="none"><circle cx="7" cy="7" r="6" stroke="#006ce0" stroke-width="2"/><path d="M11.3 11.3L15.5 15.5M7 4v6M4 7h6" stroke="#006ce0" stroke-width="2"/></svg>
<div class="t" style="left:609px;top:1098px;font-size:14px;line-height:14px;color:#0f141a;">24,192</div>
<div class="t" style="left:1031px;top:1098px;font-size:14px;line-height:14px;color:#0f141a;">24,192</div>
<div class="t" style="left:1271.5px;top:1098px;font-size:14px;line-height:14px;color:#0f141a;">-</div>
<div class="t" style="left:1510.8px;top:1098px;font-size:14px;line-height:14px;color:#0f141a;">-</div>
<div class="t" style="left:1716.3px;top:1098px;font-size:14px;line-height:14px;color:#006ce0;font-weight:700;letter-spacing:0.020px;">View breakdown</div>
<svg style="position:absolute;left:800px;top:1082px;" width="90" height="20" viewBox="0 0 90 20" fill="none"><path d="M5.2 10H82.8" stroke="#656871" stroke-width="1.5"/></svg>
<div style="position:absolute;left:47px;top:1130px;width:1830px;height:1px;background:#ebebf0;"></div>
<div style="position:absolute;left:60px;top:1148px;width:16px;height:16px;box-sizing:border-box;border:1.5px solid #8c8c94;border-radius:3px;background:#fff;"></div>
<div class="t" style="left:107.5px;top:1149px;font-size:14px;line-height:14px;color:#0f141a;letter-spacing:0.383px;">r8g</div>
<svg style="position:absolute;left:136.5px;top:1148px;" width="17" height="17" viewBox="0 0 17 17" fill="none"><circle cx="7" cy="7" r="6" stroke="#006ce0" stroke-width="2"/><path d="M11.3 11.3L15.5 15.5M7 4v6M4 7h6" stroke="#006ce0" stroke-width="2"/></svg>
<svg style="position:absolute;left:170.5px;top:1149px;" width="13" height="13" viewBox="0 0 13 13" fill="none"><path d="M1 1L12 12M12 1L1 12" stroke="#006ce0" stroke-width="2"/></svg>
<div class="t" style="left:362.2px;top:1149px;font-size:14px;line-height:14px;color:#0f141a;letter-spacing:0.143px;">r8g.16xlarge</div>
<svg style="position:absolute;left:449.1px;top:1148px;" width="17" height="17" viewBox="0 0 17 17" fill="none"><circle cx="7" cy="7" r="6" stroke="#006ce0" stroke-width="2"/><path d="M11.3 11.3L15.5 15.5M7 4v6M4 7h6" stroke="#006ce0" stroke-width="2"/></svg>
<div class="t" style="left:609px;top:1149px;font-size:14px;line-height:14px;color:#0f141a;">10,752</div>
<div class="t" style="left:1031px;top:1149px;font-size:14px;line-height:14px;color:#0f141a;">10,752</div>
<div class="t" style="left:1271.5px;top:1149px;font-size:14px;line-height:14px;color:#0f141a;">-</div>
<div class="t" style="left:1510.8px;top:1149px;font-size:14px;line-height:14px;color:#0f141a;">-</div>
<div class="t" style="left:1716.3px;top:1149px;font-size:14px;line-height:14px;color:#006ce0;font-weight:700;letter-spacing:0.020px;">View breakdown</div>
<svg style="position:absolute;left:800px;top:1133px;" width="90" height="20" viewBox="0 0 90 20" fill="none"><path d="M5.2 10H82.8" stroke="#656871" stroke-width="1.5"/></svg>
<div style="position:absolute;left:47px;top:1181px;width:1830px;height:1px;background:#ebebf0;"></div>
<div style="position:absolute;left:60px;top:1199px;width:16px;height:16px;box-sizing:border-box;border:1.5px solid #8c8c94;border-radius:3px;background:#fff;"></div>
<div class="t" style="left:107.5px;top:1200px;font-size:14px;line-height:14px;color:#0f141a;letter-spacing:0.383px;">r8g</div>
<svg style="position:absolute;left:136.5px;top:1199px;" width="17" height="17" viewBox="0 0 17 17" fill="none"><circle cx="7" cy="7" r="6" stroke="#006ce0" stroke-width="2"/><path d="M11.3 11.3L15.5 15.5M7 4v6M4 7h6" stroke="#006ce0" stroke-width="2"/></svg>
<svg style="position:absolute;left:170.5px;top:1200px;" width="13" height="13" viewBox="0 0 13 13" fill="none"><path d="M1 1L12 12M12 1L1 12" stroke="#006ce0" stroke-width="2"/></svg>
<div class="t" style="left:362.2px;top:1200px;font-size:14px;line-height:14px;color:#0f141a;letter-spacing:0.143px;">r8g.24xlarge</div>
<svg style="position:absolute;left:449.1px;top:1199px;" width="17" height="17" viewBox="0 0 17 17" fill="none"><circle cx="7" cy="7" r="6" stroke="#006ce0" stroke-width="2"/><path d="M11.3 11.3L15.5 15.5M7 4v6M4 7h6" stroke="#006ce0" stroke-width="2"/></svg>
<div class="t" style="left:609px;top:1200px;font-size:14px;line-height:14px;color:#0f141a;">32,256</div>
<div class="t" style="left:1031px;top:1200px;font-size:14px;line-height:14px;color:#0f141a;">32,256</div>
<div class="t" style="left:1271.5px;top:1200px;font-size:14px;line-height:14px;color:#0f141a;">-</div>
<div class="t" style="left:1510.8px;top:1200px;font-size:14px;line-height:14px;color:#0f141a;">-</div>
<div class="t" style="left:1716.3px;top:1200px;font-size:14px;line-height:14px;color:#006ce0;font-weight:700;letter-spacing:0.020px;">View breakdown</div>
<svg style="position:absolute;left:800px;top:1184px;" width="90" height="20" viewBox="0 0 90 20" fill="none"><path d="M5.2 10H82.8" stroke="#656871" stroke-width="1.5"/></svg>
<div style="position:absolute;left:47px;top:1232px;width:1830px;height:1px;background:#ebebf0;"></div>
<div style="position:absolute;left:60px;top:1250px;width:16px;height:16px;box-sizing:border-box;border:1.5px solid #8c8c94;border-radius:3px;background:#fff;"></div>
<div class="t" style="left:107.5px;top:1251px;font-size:14px;line-height:14px;color:#0f141a;letter-spacing:0.383px;">r8g</div>
<svg style="position:absolute;left:136.5px;top:1250px;" width="17" height="17" viewBox="0 0 17 17" fill="none"><circle cx="7" cy="7" r="6" stroke="#006ce0" stroke-width="2"/><path d="M11.3 11.3L15.5 15.5M7 4v6M4 7h6" stroke="#006ce0" stroke-width="2"/></svg>
<svg style="position:absolute;left:170.5px;top:1251px;" width="13" height="13" viewBox="0 0 13 13" fill="none"><path d="M1 1L12 12M12 1L1 12" stroke="#006ce0" stroke-width="2"/></svg>
<div class="t" style="left:362.2px;top:1251px;font-size:14px;line-height:14px;color:#0f141a;letter-spacing:0.106px;">r8g.2xlarge</div>
<svg style="position:absolute;left:440.79999999999995px;top:1250px;" width="17" height="17" viewBox="0 0 17 17" fill="none"><circle cx="7" cy="7" r="6" stroke="#006ce0" stroke-width="2"/><path d="M11.3 11.3L15.5 15.5M7 4v6M4 7h6" stroke="#006ce0" stroke-width="2"/></svg>
<div class="t" style="left:609px;top:1251px;font-size:14px;line-height:14px;color:#0f141a;">21,579</div>
<div class="t" style="left:1031px;top:1251px;font-size:14px;line-height:14px;color:#0f141a;">21,540</div>
<div class="t" style="left:1271.5px;top:1251px;font-size:14px;line-height:14px;color:#0f141a;">39</div>
<div class="t" style="left:1510.8px;top:1251px;font-size:14px;line-height:14px;color:#0f141a;">-</div>
<div class="t" style="left:1716.3px;top:1251px;font-size:14px;line-height:14px;color:#006ce0;font-weight:700;letter-spacing:0.020px;">View breakdown</div>
<svg style="position:absolute;left:800px;top:1237.9px;" width="90" height="20" viewBox="0 0 90 20" fill="none"><path d="M5.2 10H10L11 8.8L12 10H21.5L22.5 8.5L23.5 11L24.5 10H30L31 8.8L32 10H35L36 8.6L37 10H39.5L40.5 8.8L41.5 10H45L46 8.6L47 10H75L76 9L77 10H79.8L80.8 7L81.5 10H82.8" stroke="#656871" stroke-width="1.5"/></svg>
<div class="t" style="left:47.5px;top:1345px;font-size:20px;line-height:20px;color:#0f141a;font-weight:700;letter-spacing:-0.825px;">Statistics</div>
<div class="t" style="left:47.5px;top:1385.5px;font-size:14px;line-height:14px;color:#0f141a;font-weight:700;letter-spacing:-0.071px;">Unit</div>
<div style="position:absolute;left:83px;top:1386px;width:1px;height:16px;background:#c6c6cd;"></div>
<div class="t" style="left:92.3px;top:1387.5px;font-size:12px;line-height:12px;color:#006ce0;font-weight:700;letter-spacing:0.003px;">Info</div>
<div style="position:absolute;left:47px;top:1407px;width:90px;height:32px;box-sizing:border-box;border:1px solid #8c8c94;border-radius:8px;background:#fff;"></div>
<div class="t" style="left:59.8px;top:1416px;font-size:14px;line-height:14px;color:#0f141a;letter-spacing:-0.640px;">vCPUs</div>
<svg style="position:absolute;left:111.3px;top:1419px;" width="10" height="9" viewBox="0 0 10 9" fill="none"><path d="M0.8 0.8H9.2L5 7.8Z" fill="#006ce0" stroke="#006ce0" stroke-width="1.6" stroke-linejoin="round"/></svg>
<div class="t" style="left:47.5px;top:1458px;font-size:14px;line-height:14px;color:#0f141a;font-weight:700;letter-spacing:-0.205px;">Total usage</div>
<div class="t" style="left:47.5px;top:1478px;font-size:14px;line-height:14px;color:#0f141a;letter-spacing:-0.122px;">13.17M vCPU hours</div>
<div class="t" style="left:529.7px;top:1458px;font-size:14px;line-height:14px;color:#0f141a;font-weight:700;letter-spacing:-0.469px;">Reserved usage</div>
<div class="t" style="left:529.7px;top:1478px;font-size:14px;line-height:14px;color:#0f141a;letter-spacing:-0.085px;">12.63M vCPU hours</div>
<div class="t" style="left:529.7px;top:1514px;font-size:14px;line-height:14px;color:#0f141a;font-weight:700;letter-spacing:-0.313px;">Unreserved usage</div>
<div class="t" style="left:529.7px;top:1534px;font-size:14px;line-height:14px;color:#0f141a;letter-spacing:-0.113px;">543.72K vCPU hours</div>
<div class="t" style="left:529.7px;top:1570px;font-size:14px;line-height:14px;color:#0f141a;font-weight:700;letter-spacing:-0.395px;">Spot usage</div>
<div class="t" style="left:529.7px;top:1590px;font-size:14px;line-height:14px;color:#0f141a;letter-spacing:-0.231px;">0 vCPU hours</div>
<div class="t" style="left:991.6px;top:1458px;font-size:14px;line-height:14px;color:#0f141a;font-weight:700;letter-spacing:-0.165px;">Reserved usage (as a percentage of total)</div>
<div class="t" style="left:991.6px;top:1478px;font-size:14px;line-height:14px;color:#0f141a;letter-spacing:0.426px;">95.9%</div>
<div class="t" style="left:991.6px;top:1514px;font-size:14px;line-height:14px;color:#0f141a;font-weight:700;letter-spacing:-0.114px;">Unreserved usage (as a percentage of total)</div>
<div class="t" style="left:991.6px;top:1534px;font-size:14px;line-height:14px;color:#0f141a;">4.1%</div>
<div class="t" style="left:991.6px;top:1570px;font-size:14px;line-height:14px;color:#0f141a;font-weight:700;letter-spacing:-0.107px;">Spot usage (as a percentage of total)</div>
<div class="t" style="left:991.6px;top:1590px;font-size:14px;line-height:14px;color:#0f141a;">0.0%</div>
<div class="t" style="left:1454.2px;top:1458px;font-size:14px;line-height:14px;color:#0f141a;font-weight:700;letter-spacing:-0.279px;">Accounts with usage</div>
<div class="t" style="left:1454.2px;top:1478px;font-size:14px;line-height:14px;color:#0f141a;">1</div>
<div class="t" style="left:1454.2px;top:1514px;font-size:14px;line-height:14px;color:#0f141a;font-weight:700;letter-spacing:-0.110px;">Instance families with usage</div>
<div class="t" style="left:1454.2px;top:1534px;font-size:14px;line-height:14px;color:#0f141a;">2</div>
<div class="t" style="left:1454.2px;top:1570px;font-size:14px;line-height:14px;color:#0f141a;font-weight:700;letter-spacing:-0.239px;">Regions with usage</div>
<div class="t" style="left:1454.2px;top:1590px;font-size:14px;line-height:14px;color:#0f141a;">3</div>
<div style="position:absolute;left:500px;top:1455px;width:1px;height:152px;background:#c6c6cd;"></div>
<div style="position:absolute;left:962px;top:1455px;width:1px;height:152px;background:#c6c6cd;"></div>
<div style="position:absolute;left:1425px;top:1455px;width:1px;height:152px;background:#c6c6cd;"></div>
<div class="t" style="left:47.5px;top:1659px;font-size:20px;line-height:20px;color:#0f141a;font-weight:700;letter-spacing:-0.620px;">Capacity usage or estimated cost trends</div>
<div class="t" style="left:47.5px;top:1695.5px;font-size:14px;line-height:14px;color:#0f141a;font-weight:700;letter-spacing:-0.069px;">Filter displayed data</div>
<div style="position:absolute;left:47px;top:1717px;width:280px;height:32px;box-sizing:border-box;border:1px solid #8c8c94;border-radius:8px;background:#fff;"></div>
<div class="t" style="left:60.1px;top:1725.5px;font-size:14px;line-height:14px;color:#656871;font-style:italic;letter-spacing:0.145px;">Filter data</div>
<svg style="position:absolute;left:300.7px;top:1729px;" width="10" height="9" viewBox="0 0 10 9" fill="none"><path d="M0.8 0.8H9.2L5 7.8Z" fill="#006ce0" stroke="#006ce0" stroke-width="1.6" stroke-linejoin="round"/></svg>
<div class="t" style="left:347.5px;top:1695.5px;font-size:14px;line-height:14px;color:#0f141a;font-weight:700;letter-spacing:-0.071px;">Unit</div>
<div style="position:absolute;left:383px;top:1697px;width:1px;height:16px;background:#c6c6cd;"></div>
<div class="t" style="left:392.2px;top:1697.5px;font-size:12px;line-height:12px;color:#006ce0;font-weight:700;letter-spacing:0.003px;">Info</div>
<div style="position:absolute;left:347px;top:1717px;width:90px;height:32px;box-sizing:border-box;border:1px solid #8c8c94;border-radius:8px;background:#fff;"></div>
<div class="t" style="left:360px;top:1725.5px;font-size:14px;line-height:14px;color:#0f141a;letter-spacing:-0.640px;">vCPUs</div>
<svg style="position:absolute;left:410.9px;top:1729px;" width="10" height="9" viewBox="0 0 10 9" fill="none"><path d="M0.8 0.8H9.2L5 7.8Z" fill="#006ce0" stroke="#006ce0" stroke-width="1.6" stroke-linejoin="round"/></svg>
<div class="t" style="left:47.1px;top:1772px;font-size:14px;line-height:14px;color:#0f141a;font-weight:700;letter-spacing:-0.547px;">vCPU hours</div>
<svg style="position:absolute;left:0px;top:1790px;" width="1924" height="240" viewBox="0 0 1924 240" fill="none"><path d="M87.0 19.7 L330.0 19.9 L392.6 20.7 L453.6 21.9 L630.0 22.5 L864.0 22.5 L887.0 23.5 L910.0 23.5 L1210.0 24.8 L1406.0 25.2 L1434.0 26.5 L1500.0 26.8 L1592.0 26.5 L1612.0 29.0 L1663.0 29.8 L1840.0 29.9 L1863.0 30.4 L1863.0 61.0 L1840.0 60.7 L1646.6 60.6 L1608.7 59.8 L1585.6 57.5 L1524.6 58.3 L1434.0 58.1 L1358.0 56.3 L1210.0 56.1 L910.0 55.1 L887.0 55.1 L857.0 54.3 L630.0 54.3 L448.7 54.2 L404.0 53.2 L330.0 51.3 L87.0 51.0 Z" fill="#f8eab8"/><path d="M87.0 51.0 L330.0 51.3 L404.0 53.2 L448.7 54.2 L630.0 54.3 L857.0 54.3 L887.0 55.1 L910.0 55.1 L1210.0 56.1 L1358.0 56.3 L1434.0 58.1 L1524.6 58.3 L1585.6 57.5 L1608.7 59.8 L1646.6 60.6 L1840.0 60.7 L1863.0 61.0 L1863.0 218.5 L87.0 218.5 Z" fill="#c2dab9"/><path d="M79.5 84.3 L1873.0 84.3" stroke="#9aa39a" stroke-opacity="0.35" stroke-width="1"/><path d="M79.5 151.3 L1873.0 151.3" stroke="#9aa39a" stroke-opacity="0.35" stroke-width="1"/><path d="M87.0 19.7 L330.0 19.9 L392.6 20.7 L453.6 21.9 L630.0 22.5 L864.0 22.5 L887.0 23.5 L910.0 23.5 L1210.0 24.8 L1406.0 25.2 L1434.0 26.5 L1500.0 26.8 L1592.0 26.5 L1612.0 29.0 L1663.0 29.8 L1840.0 29.9 L1863.0 30.4" stroke="#eec84b" stroke-width="1.8"/><path d="M87.0 51.0 L330.0 51.3 L404.0 53.2 L448.7 54.2 L630.0 54.3 L857.0 54.3 L887.0 55.1 L910.0 55.1 L1210.0 56.1 L1358.0 56.3 L1434.0 58.1 L1524.6 58.3 L1585.6 57.5 L1608.7 59.8 L1646.6 60.6 L1840.0 60.7 L1863.0 61.0" stroke="#67a353" stroke-width="1.9"/><path d="M79.5 219.0 L1873.0 219.0" stroke="#dcdce2" stroke-width="2"/><path d="M203.6 220.0 L203.6 226.0" stroke="#dcdce2" stroke-width="1"/><path d="M331.2 220.0 L331.2 226.0" stroke="#dcdce2" stroke-width="1"/><path d="M458.8 220.0 L458.8 226.0" stroke="#dcdce2" stroke-width="1"/><path d="M586.3 220.0 L586.3 226.0" stroke="#dcdce2" stroke-width="1"/><path d="M713.9 220.0 L713.9 226.0" stroke="#dcdce2" stroke-width="1"/><path d="M841.5 220.0 L841.5 226.0" stroke="#dcdce2" stroke-width="1"/><path d="M969.1 220.0 L969.1 226.0" stroke="#dcdce2" stroke-width="1"/><path d="M1096.7 220.0 L1096.7 226.0" stroke="#dcdce2" stroke-width="1"/><path d="M1224.2 220.0 L1224.2 226.0" stroke="#dcdce2" stroke-width="1"/><path d="M1351.8 220.0 L1351.8 226.0" stroke="#dcdce2" stroke-width="1"/><path d="M1479.4 220.0 L1479.4 226.0" stroke="#dcdce2" stroke-width="1"/><path d="M1607.0 220.0 L1607.0 226.0" stroke="#dcdce2" stroke-width="1"/><path d="M1734.6 220.0 L1734.6 226.0" stroke="#dcdce2" stroke-width="1"/><path d="M1862.1 220.0 L1862.1 226.0" stroke="#dcdce2" stroke-width="1"/></svg>
<div class="t" style="left:51.5px;top:1869px;font-size:12px;line-height:12px;color:#424650;letter-spacing:-0.122px;">10M</div>
<div class="t" style="left:58.6px;top:1935.8px;font-size:12px;line-height:12px;color:#424650;letter-spacing:-0.670px;">5M</div>
<div class="t" style="left:68.5px;top:2003.5px;font-size:12px;line-height:12px;color:#424650;">0</div>
<div class="t" style="left:163.6px;width:80px;text-align:center;top:2021.5px;font-size:12px;line-height:12px;color:#424650;">Oct 9</div>
<div class="t" style="left:163.6px;width:80px;text-align:center;top:2037px;font-size:12px;line-height:12px;color:#424650;">12:00</div>
<div class="t" style="left:291.2px;width:80px;text-align:center;top:2021.5px;font-size:12px;line-height:12px;color:#424650;">Oct 10</div>
<div class="t" style="left:291.2px;width:80px;text-align:center;top:2037px;font-size:12px;line-height:12px;color:#424650;">00:00</div>
<div class="t" style="left:418.8px;width:80px;text-align:center;top:2021.5px;font-size:12px;line-height:12px;color:#424650;">Oct 10</div>
<div class="t" style="left:418.8px;width:80px;text-align:center;top:2037px;font-size:12px;line-height:12px;color:#424650;">12:00</div>
<div class="t" style="left:546.3px;width:80px;text-align:center;top:2021.5px;font-size:12px;line-height:12px;color:#424650;">Oct 11</div>
<div class="t" style="left:546.3px;width:80px;text-align:center;top:2037px;font-size:12px;line-height:12px;color:#424650;">00:00</div>
<div class="t" style="left:673.9px;width:80px;text-align:center;top:2021.5px;font-size:12px;line-height:12px;color:#424650;">Oct 11</div>
<div class="t" style="left:673.9px;width:80px;text-align:center;top:2037px;font-size:12px;line-height:12px;color:#424650;">12:00</div>
<div class="t" style="left:801.5px;width:80px;text-align:center;top:2021.5px;font-size:12px;line-height:12px;color:#424650;">Oct 12</div>
<div class="t" style="left:801.5px;width:80px;text-align:center;top:2037px;font-size:12px;line-height:12px;color:#424650;">00:00</div>
<div class="t" style="left:929.1px;width:80px;text-align:center;top:2021.5px;font-size:12px;line-height:12px;color:#424650;">Oct 12</div>
<div class="t" style="left:929.1px;width:80px;text-align:center;top:2037px;font-size:12px;line-height:12px;color:#424650;">12:00</div>
<div class="t" style="left:1056.7px;width:80px;text-align:center;top:2021.5px;font-size:12px;line-height:12px;color:#424650;">Oct 13</div>
<div class="t" style="left:1056.7px;width:80px;text-align:center;top:2037px;font-size:12px;line-height:12px;color:#424650;">00:00</div>
<div class="t" style="left:1184.2px;width:80px;text-align:center;top:2021.5px;font-size:12px;line-height:12px;color:#424650;">Oct 13</div>
<div class="t" style="left:1184.2px;width:80px;text-align:center;top:2037px;font-size:12px;line-height:12px;color:#424650;">12:00</div>
<div class="t" style="left:1311.8px;width:80px;text-align:center;top:2021.5px;font-size:12px;line-height:12px;color:#424650;">Oct 14</div>
<div class="t" style="left:1311.8px;width:80px;text-align:center;top:2037px;font-size:12px;line-height:12px;color:#424650;">00:00</div>
<div class="t" style="left:1439.4px;width:80px;text-align:center;top:2021.5px;font-size:12px;line-height:12px;color:#424650;">Oct 14</div>
<div class="t" style="left:1439.4px;width:80px;text-align:center;top:2037px;font-size:12px;line-height:12px;color:#424650;">12:00</div>
<div class="t" style="left:1567.0px;width:80px;text-align:center;top:2021.5px;font-size:12px;line-height:12px;color:#424650;">Oct 15</div>
<div class="t" style="left:1567.0px;width:80px;text-align:center;top:2037px;font-size:12px;line-height:12px;color:#424650;">00:00</div>
<div class="t" style="left:1694.6px;width:80px;text-align:center;top:2021.5px;font-size:12px;line-height:12px;color:#424650;">Oct 15</div>
<div class="t" style="left:1694.6px;width:80px;text-align:center;top:2037px;font-size:12px;line-height:12px;color:#424650;">12:00</div>
<div class="t" style="left:1822.1px;width:80px;text-align:center;top:2021.5px;font-size:12px;line-height:12px;color:#424650;">Oct 16</div>
<div class="t" style="left:1822.1px;width:80px;text-align:center;top:2037px;font-size:12px;line-height:12px;color:#424650;">00:00</div>
<div class="t" style="left:967.7px;top:2056px;font-size:14px;line-height:14px;color:#0f141a;font-weight:700;letter-spacing:-0.448px;">Date</div>
<div style="position:absolute;left:47px;top:2093px;width:14px;height:14px;box-sizing:border-box;border:2px solid #67a353;border-radius:2px;background:#c2dab9;"></div>
<div class="t" style="left:65.3px;top:2092px;font-size:14px;line-height:14px;color:#0f141a;letter-spacing:-0.327px;">Reserved usage</div>
<div style="position:absolute;left:179px;top:2093px;width:14px;height:14px;box-sizing:border-box;border:2px solid #eec84b;border-radius:2px;background:#f8eab8;"></div>
<div class="t" style="left:197.6px;top:2092px;font-size:14px;line-height:14px;color:#0f141a;letter-spacing:-0.140px;">Unreserved usage</div>
<div style="position:absolute;left:326px;top:2093px;width:14px;height:14px;box-sizing:border-box;border:2px solid #3d88d4;border-radius:2px;background:#a9cbee;"></div>
<div class="t" style="left:344.8px;top:2092px;font-size:14px;line-height:14px;color:#0f141a;letter-spacing:-0.148px;">Spot usage</div>
<div style="position:absolute;left:0px;top:0px;width:1924px;height:2px;background:#000;"></div>
<div style="position:absolute;left:0px;top:2155px;width:1924px;height:2px;background:#000;"></div>
<div style="position:absolute;left:0px;top:0px;width:2px;height:2157px;background:#000;"></div>
<div style="position:absolute;left:1922px;top:0px;width:2px;height:2157px;background:#000;"></div>
</body></html>
